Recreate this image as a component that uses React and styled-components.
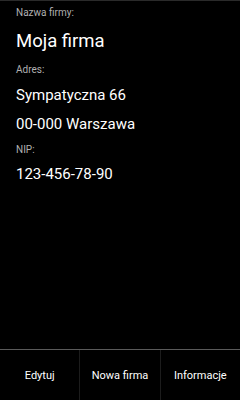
import React from 'react';
import styled, { createGlobalStyle } from 'styled-components';

const GlobalStyle = createGlobalStyle`
  html, body {
    margin: 0;
    padding: 0;
    background: #000;
  }
  body {
    font-family: Roboto, "Noto Sans", sans-serif;
    color: #fff;
  }
`;

const App = () => {
  return (
    <>
      <GlobalStyle />
      <StyledScreen>
        <StyledDetails>
          <Label>Nazwa firmy:</Label>
          <Value size="large" $gap={9}>Moja firma</Value>
          <Label $gap={10}>Adres:</Label>
          <Value $gap={8}>Sympatyczna 66</Value>
          <Value $gap={9}>00-000 Warszawa</Value>
          <Label $gap={9}>NIP:</Label>
          <Value $gap={7}>123-456-78-90</Value>
        </StyledDetails>

        <StyledActionBar>
          <ActionButton>Edytuj</ActionButton>
          <ActionButton>Nowa firma</ActionButton>
          <ActionButton>Informacje</ActionButton>
        </StyledActionBar>
      </StyledScreen>
    </>
  );
};

const StyledScreen = styled.main`
  width: 240px;
  height: 400px;
  display: flex;
  flex-direction: column;
  background: #000;
  border-top: 1px solid #2a2a2a;
  box-sizing: border-box;
`;

const StyledDetails = styled.section`
  flex: 1;
  display: flex;
  flex-direction: column;
  padding: 5px 16px 0;
`;

const Label = styled.p`
  margin: ${({ $gap = 0 }) => $gap}px 0 0;
  font-size: 10px;
  line-height: 14px;
  color: #b0b0b0;
`;

const Value = styled.p`
  margin: ${({ $gap = 0 }) => $gap}px 0 0;
  font-size: ${({ size }) => (size === 'large' ? '18.5px' : '15px')};
  line-height: ${({ size }) => (size === 'large' ? '24px' : '20px')};
  color: #fff;
`;

const StyledActionBar = styled.nav`
  display: flex;
  height: 50px;
  border-top: 1px solid #5a5a5a;
`;

const ActionButton = styled.button`
  flex: 1;
  background: transparent;
  border: none;
  color: #fff;
  font-family: Roboto, "Noto Sans", sans-serif;
  font-size: 11px;
  padding: 0;
  cursor: pointer;

  & + & {
    border-left: 1px solid #1c1c1c;
  }
`;

export default App;
